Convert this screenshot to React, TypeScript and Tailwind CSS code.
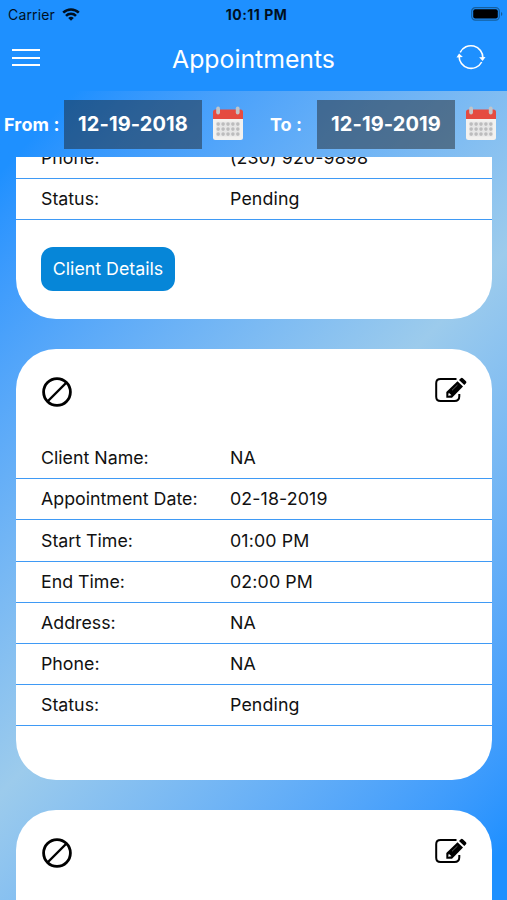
const cards = [
  {
    clipped: true,
    details: true,
    rows: [
      ['Phone:', '(230) 920-9898'],
      ['Status:', 'Pending'],
    ],
  },
  {
    rows: [
      ['Client Name:', 'NA'],
      ['Appointment Date:', '02-18-2019'],
      ['Start Time:', '01:00 PM'],
      ['End Time:', '02:00 PM'],
      ['Address:', 'NA'],
      ['Phone:', 'NA'],
      ['Status:', 'Pending'],
    ],
  },
  { rows: [] },
];

function WifiIcon() {
  return (
    <svg className="h-[13px] w-[18px]" viewBox="0 0 18 13" fill="none" stroke="#00101f" strokeWidth="2.5">
      <path d="M1.2 4.7a11 11 0 0 1 15.6 0" />
      <path d="M4 7.9a7 7 0 0 1 10 0" />
      <path d="M9 12.8 6.2 10a4 4 0 0 1 5.6 0z" fill="#00101f" stroke="none" />
    </svg>
  );
}

function BatteryIcon() {
  return (
    <svg className="h-[14px] w-[32px]" viewBox="0 0 32 14">
      <rect x="0.7" y="0.7" width="27.6" height="12.4" rx="3.6" fill="none" stroke="#155f9f" strokeWidth="1.2" />
      <rect x="2.2" y="2.3" width="24.6" height="9.2" rx="2" fill="#000" />
      <path d="M30 5v4q1.3-.6 1.3-2T30 5z" fill="#155f9f" />
    </svg>
  );
}

function RefreshIcon() {
  return (
    <svg className="h-[28px] w-[30px]" viewBox="0 0 30 28" fill="none" stroke="#fff" strokeWidth="1.6">
      <path d="M4.2 9.3A12 12 0 0 1 26.9 15" />
      <path d="M25.7 19A12 12 0 0 1 3.1 13" />
      <path d="M0.5 14.4 3.1 10.5 6.8 13.9z" fill="#fff" stroke="none" />
      <path d="M23.1 14.2 29.5 14 26.6 18.1z" fill="#fff" stroke="none" />
    </svg>
  );
}

function CalendarIcon() {
  return (
    <svg className="h-[34px] w-[30px]" viewBox="0 0 30 34">
      <path d="M0 12h30v19.5a2.5 2.5 0 0 1-2.5 2.5h-25A2.5 2.5 0 0 1 0 31.5z" fill="#f2f1ef" />
      <path d="M0 13V6a2.5 2.5 0 0 1 2.5-2.5h25A2.5 2.5 0 0 1 30 6v7z" fill="#e54b40" />
      <rect x="3.2" y="0.5" width="3.8" height="8" rx="1.9" fill="#c3c5c9" />
      <rect x="22.8" y="0.5" width="3.8" height="8" rx="1.9" fill="#c3c5c9" />
      <rect x="3.2" y="15.8" width="23.6" height="14.6" fill="#e6e6e6" />
      {[18.1, 23.1, 28.1].map((y) =>
        [5.2, 10.1, 15, 19.9, 24.8].map((x) => (
          <circle key={`${x}-${y}`} cx={x} cy={y} r="1.8" fill="#bcbcbd" />
        ))
      )}
    </svg>
  );
}

function CancelIcon() {
  return (
    <svg className="h-[30px] w-[30px]" viewBox="0 0 30 30" fill="none" stroke="#000">
      <circle cx="15" cy="15" r="13.4" strokeWidth="2.8" />
      <path d="M5.5 24.5 24.5 5.5" strokeWidth="2.4" />
    </svg>
  );
}

function EditIcon() {
  return (
    <svg className="h-[26px] w-[32px]" viewBox="0 0 32 26">
      <path
        d="M21.5 2H5.5Q1.2 2 1.2 6.300V19.7Q1.2 24 5.5 24H19.5Q24.3 24 24.3 19.2V17"
        fill="none"
        stroke="#000"
        strokeWidth="2"
      />
      <path d="M11.3 20.8V15L22.5 4.2 28 9.6 17 20.8z" fill="#000" />
      <path d="M24 3 25.8 1.2Q26.8 .3 27.8 1.2L31 4.3Q31.9 5.3 31 6.200L29.3 8z" fill="#000" />
      <path d="M17 13.3 22.500 8" stroke="#888" strokeWidth="0.7" />
      <path d="M13.2 18.7 13.7 15.8 16.5 18.3z" fill="#fff" />
    </svg>
  );
}

function DateField({ value }: { value: string }) {
  return (
    <>
      <button className="h-[49px] w-[138px] shrink-0 bg-[#1c1c1c]/46 text-[20px] font-bold tracking-[0.1px]">
        {value}
      </button>
      <div className="mb-[2px] ml-[11px]">
        <CalendarIcon />
      </div>
    </>
  );
}

export default function App() {
  return (
    <div className="flex h-[900px] w-[507px] flex-col overflow-hidden bg-[#1e90ff] font-['Inter','Liberation_Sans',sans-serif]">
      {/* Status bar */}
      <div className="grid h-[28px] shrink-0 grid-cols-3 items-center pl-2 pr-[4px] text-[14px] text-[#00101f]">
        <div className="flex items-center gap-[7px]">
          <span className="tracking-[0.15px]">Carrier</span>
          <WifiIcon />
        </div>
        <span className="pl-[2px] text-center font-bold tracking-[0.5px]">10:11 PM</span>
        <div className="flex justify-end">
          <BatteryIcon />
        </div>
      </div>

      {/* Header */}
      <header className="grid h-[63px] shrink-0 grid-cols-[1fr_auto_1fr] items-center pl-[12px] pr-[12px] text-white">
        <div className="mb-[4px] flex w-[28px] flex-col gap-[5.5px]">
          <span className="h-[2px] bg-white" />
          <span className="h-[2px] bg-white" />
          <span className="h-[2px] bg-white" />
        </div>
        <h1 className="text-[24.8px]">Appointments</h1>
        <div className="mb-[5px] mr-[9px] justify-self-end">
          <RefreshIcon />
        </div>
      </header>

      <div className="flex min-h-0 flex-1 flex-col bg-linear-133 from-[#1e90ff] from-6% via-[#9ccbec] via-52% to-[#1e90ff] to-96%">
        {/* Date filter */}
        <div className="flex h-[66px] shrink-0 items-center text-[18px] font-bold text-white">
          <span className="w-[64px] pl-[4px] tracking-[0.15px]">From :</span>
          <DateField value="12-19-2018" />
          <span className="w-[74px] pl-[27px]">To :</span>
          <DateField value="12-19-2019" />
        </div>

        {/* Appointment list */}
        <main className="flex min-h-0 flex-1 flex-col gap-[30px] overflow-hidden px-4 text-[17.8px] text-[#111]">
          {cards.map((card, i) => (
            <section
              key={i}
              className={
                card.clipped
                  ? '-mt-[19px] h-[181px] w-[476px] shrink-0 rounded-b-[40px] bg-white'
                  : 'h-[431px] w-[476px] shrink-0 rounded-[40px] bg-white'
              }
            >
              {!card.clipped && (
                <div className="flex h-[89px] items-start justify-between pl-[25.5px] pr-[25px] pt-[28px]">
                  <CancelIcon />
                  <EditIcon />
                </div>
              )}
              {card.rows.map(([label, value]) => (
                <div key={label} className="flex h-[41.2px] items-center border-b border-[#3f9af5] pl-[25px] pt-px">
                  <span className="w-[189px]">{label}</span>
                  <span className="tracking-[0.12px]">{value}</span>
                </div>
              ))}
              {card.details && (
                <button className="ml-[25px] mt-[27px] h-[44px] w-[134px] rounded-[12px] bg-[#0686d8] text-white">
                  Client Details
                </button>
              )}
            </section>
          ))}
        </main>
      </div>
    </div>
  );
}
